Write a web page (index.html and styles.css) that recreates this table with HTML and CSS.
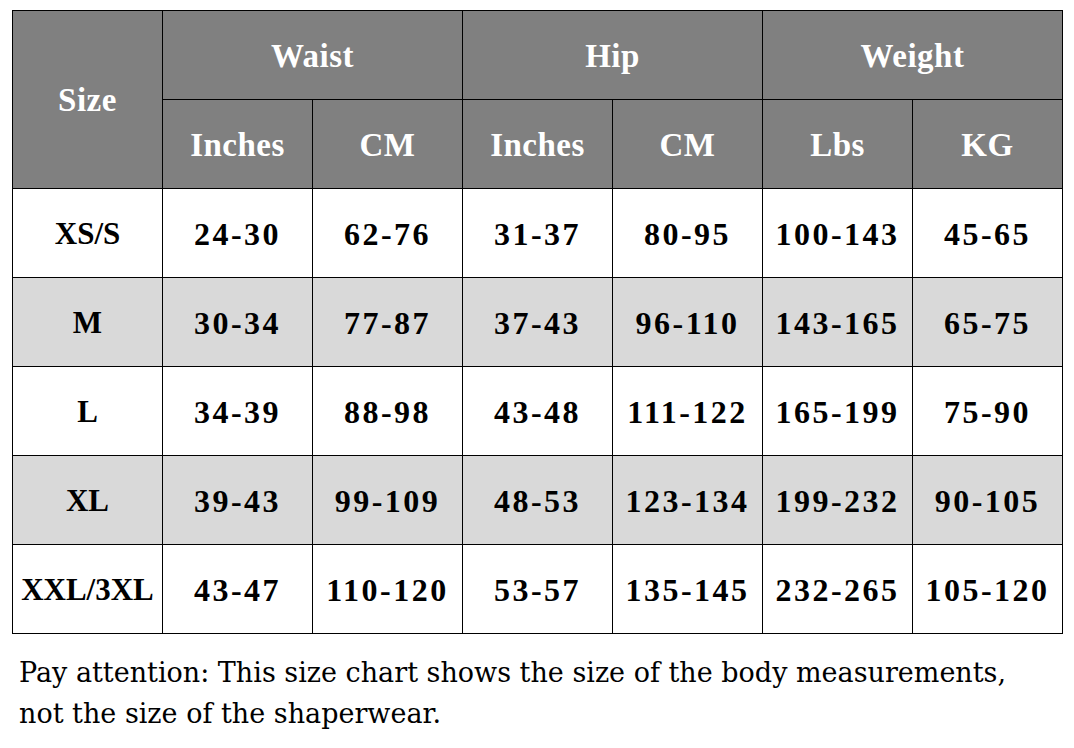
FILE: index.html
```html
<!DOCTYPE html>
<html>
<head>
<meta charset="utf-8">
<link rel="stylesheet" href="styles.css">
</head>
<body>
<div class="page">
<table class="chart">
  <colgroup>
    <col class="c"><col class="c"><col class="c"><col class="c"><col class="c"><col class="c"><col class="c">
  </colgroup>
  <thead>
    <tr>
      <th rowspan="2">Size</th>
      <th colspan="2">Waist</th>
      <th colspan="2">Hip</th>
      <th colspan="2">Weight</th>
    </tr>
    <tr>
      <th>Inches</th><th>CM</th><th>Inches</th><th>CM</th><th>Lbs</th><th>KG</th>
    </tr>
  </thead>
  <tbody>
    <tr><td class="size">XS/S</td><td>24-30</td><td>62-76</td><td>31-37</td><td>80-95</td><td>100-143</td><td>45-65</td></tr>
    <tr class="alt"><td class="size">M</td><td>30-34</td><td>77-87</td><td>37-43</td><td>96-110</td><td>143-165</td><td>65-75</td></tr>
    <tr><td class="size">L</td><td>34-39</td><td>88-98</td><td>43-48</td><td>111-122</td><td>165-199</td><td>75-90</td></tr>
    <tr class="alt"><td class="size">XL</td><td>39-43</td><td>99-109</td><td>48-53</td><td>123-134</td><td>199-232</td><td>90-105</td></tr>
    <tr><td class="size">XXL/3XL</td><td>43-47</td><td>110-120</td><td>53-57</td><td>135-145</td><td>232-265</td><td>105-120</td></tr>
  </tbody>
</table>
<p class="note">Pay attention: This size chart shows the size of the body measurements,<br>not the size of the shaperwear.</p>
</div>
</body>
</html>
```

FILE: styles.css
```css
html, body {
  margin: 0;
  padding: 0;
  background: #ffffff;
}
.page {
  padding: 10px 0 0 12px;
  font-family: "Liberation Serif", "DejaVu Serif", serif;
}
.chart {
  border-collapse: collapse;
  table-layout: fixed;
  width: 1051px;
}
.chart .c {
  width: 150px;
}
.chart th,
.chart td {
  border: 1px solid #000000;
  padding: 0;
  text-align: center;
  vertical-align: middle;
  font-weight: bold;
  white-space: nowrap;
}
.chart th {
  height: 86px;
  padding-top: 2px;
  background: #808080;
  color: #ffffff;
  font-size: 33px;
  letter-spacing: 0.5px;
}
.chart td {
  height: 86px;
  padding-top: 2px;
  color: #000000;
  background: #ffffff;
  font-size: 32px;
  letter-spacing: 2.5px;
}
.chart tr.alt td {
  background: #d9d9d9;
}
.chart td.size {
  letter-spacing: 0;
  font-size: 31px;
}
.note {
  margin: 18px 0 0 7px;
  font-family: "DejaVu Serif", "Liberation Serif", serif;
  font-size: 27px;
  line-height: 41px;
  color: #000000;
}
```
